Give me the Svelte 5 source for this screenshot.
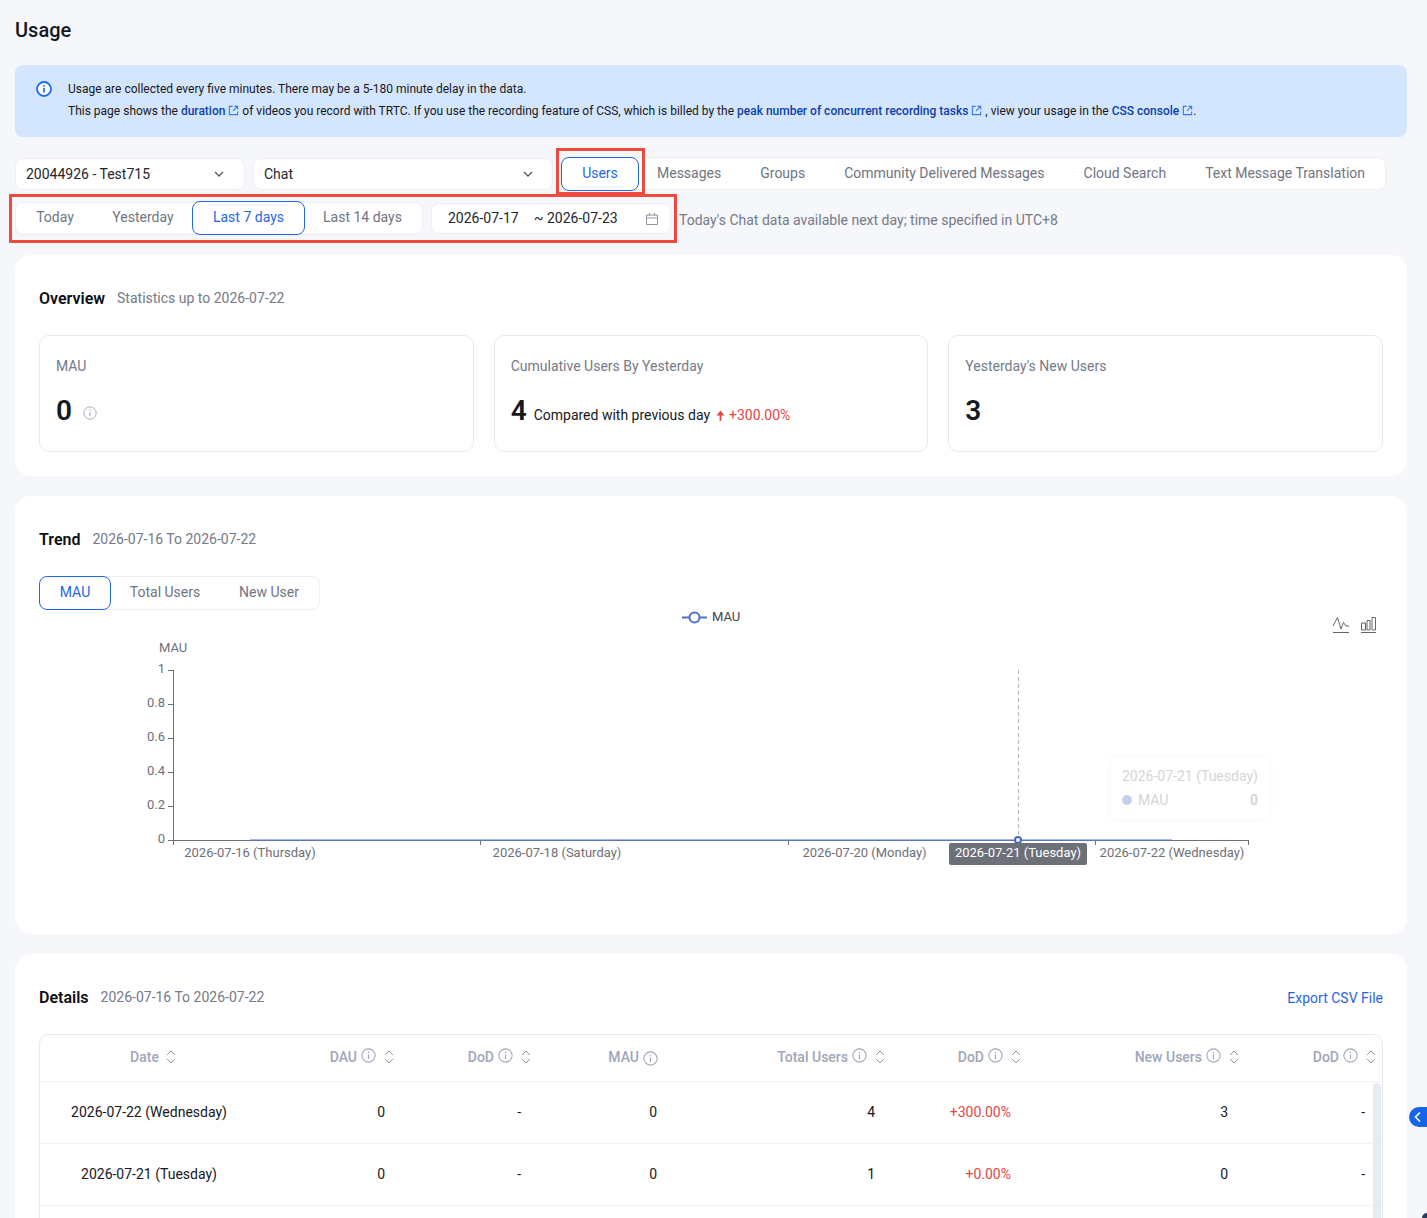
<script>
  const ticks = [
    { y: 670, t: '1' }, { y: 704, t: '0.8' }, { y: 738, t: '0.6' },
    { y: 772, t: '0.4' }, { y: 806, t: '0.2' }, { y: 840, t: '0' }
  ];
  const xTicks = [173, 480, 788, 1095, 1248];
  const xLabels = [
    { x: 250, t: '2026-07-16 (Thursday)' },
    { x: 557, t: '2026-07-18 (Saturday)' },
    { x: 864.5, t: '2026-07-20 (Monday)' },
    { x: 1172, t: '2026-07-22 (Wednesday)' }
  ];
  const headers = [
    { t: 'DAU', info: true, sort: true },
    { t: 'DoD', info: true, sort: true },
    { t: 'MAU', info: true, sort: false, low: true },
    { t: 'Total Users', info: true, sort: true },
    { t: 'DoD', info: true, sort: true },
    { t: 'New Users', info: true, sort: true },
    { t: 'DoD', info: true, sort: true }
  ];
  const rows = [
    { date: '2026-07-22 (Wednesday)', v: ['0', '-', '0', '4', '+300.00%', '3', '-'] },
    { date: '2026-07-21 (Tuesday)', v: ['0', '-', '0', '1', '+0.00%', '0', '-'] }
  ];
</script>

{#snippet ext()}
  <svg class="ext" viewBox="0 0 12 12" width="11" height="11"><path d="M5 1.5H1.5v9h9V7M7 1.5h3.5V5M10.5 1.5 5.5 6.5" fill="none" stroke="#3a7bec" stroke-width="1.2"/></svg>
{/snippet}
{#snippet info(size = 14, cls = '')}
  <svg class="info {cls}" viewBox="0 0 14 14" width={size} height={size}><circle cx="7" cy="7" r="6.2" fill="none" stroke="currentColor" stroke-width="1"/><path d="M7 6v4.2M7 3.6v1.2" stroke="currentColor" stroke-width="1.1" fill="none"/></svg>
{/snippet}
{#snippet sort()}
  <svg class="sort" viewBox="0 0 10 16" width="10" height="16"><path d="M1.2 6 5 2l3.8 4M1.2 10 5 14l3.8-4" fill="none" stroke="#8f96a3" stroke-width="1"/></svg>
{/snippet}
{#snippet chevron()}
  <svg viewBox="0 0 12 12" width="12" height="12"><path d="M2 4l4 4 4-4" fill="none" stroke="#555b66" stroke-width="1.3"/></svg>
{/snippet}

<div class="page">
  <h1>Usage</h1>

  <div class="banner">
    <svg class="bicon" viewBox="0 0 16 16" width="16" height="16"><circle cx="8" cy="8" r="7" fill="#fff" stroke="#1a6df2" stroke-width="1.8"/><path d="M8 7v4.4M8 4.2v1.5" stroke="#1a6df2" stroke-width="1.7"/></svg>
    <div class="btext">
      <p>Usage are collected every five minutes. There may be a 5-180 minute delay in the data.</p>
      <p>This page shows the <a href="#d">duration</a> {@render ext()} of videos you record with TRTC. If you use the recording feature of CSS, which is billed by the <a href="#p">peak number of concurrent recording tasks</a> {@render ext()} , view your usage in the <a href="#c">CSS console</a> {@render ext()}.</p>
    </div>
  </div>

  <div class="row1">
    <div class="select s1"><span>20044926 - Test715</span>{@render chevron()}</div>
    <div class="select s2"><span>Chat</span>{@render chevron()}</div>
    <div class="tabs t1">
      <span class="tab on users">Users</span>
      <span class="tab">Messages</span>
      <span class="tab">Groups</span>
      <span class="tab">Community Delivered Messages</span>
      <span class="tab">Cloud Search</span>
      <span class="tab">Text Message Translation</span>
    </div>
  </div>

  <div class="row2">
    <div class="tabs t2">
      <span class="tab">Today</span>
      <span class="tab">Yesterday</span>
      <span class="tab on l7">Last 7 days</span>
      <span class="tab">Last 14 days</span>
    </div>
    <div class="range">
      <span class="d1">2026-07-17</span><span class="d2">~ 2026-07-23</span>
      <svg viewBox="0 0 14 14" width="14" height="14"><path d="M1.5 3h11v9.5h-11zM1.5 6h11M4.5 1v3M9.5 1v3" fill="none" stroke="#8f96a3" stroke-width="1"/></svg>
    </div>
    <span class="note">Today's Chat data available next day; time specified in UTC+8</span>
  </div>

  <span class="mark m1"></span>
  <span class="mark m2"></span>

  <section class="card overview">
    <div class="head"><b>Overview</b><span>Statistics up to 2026-07-22</span></div>
    <div class="stats">
      <div class="stat">
        <div class="label">MAU</div>
        <div class="val"><strong>0</strong>{@render info(14, 'vinfo')}</div>
      </div>
      <div class="stat">
        <div class="label">Cumulative Users By Yesterday</div>
        <div class="val"><strong>4</strong><span class="cmp">Compared with previous day</span>
          <svg class="up" viewBox="0 0 10 12" width="9" height="11"><path d="M5 12V4" fill="none" stroke="#e54545" stroke-width="2"/><path d="M0.5 6 5 0.5 9.500 6z" fill="#e54545"/></svg>
          <span class="red">+300.00%</span></div>
      </div>
      <div class="stat">
        <div class="label">Yesterday's New Users</div>
        <div class="val"><strong>3</strong></div>
      </div>
    </div>
  </section>

  <section class="card trend">
    <div class="head"><b>Trend</b><span>2026-07-16 To 2026-07-22</span></div>
    <div class="tabs t3">
      <span class="tab on mau">MAU</span>
      <span class="tab">Total Users</span>
      <span class="tab">New User</span>
    </div>
    <div class="chart">
      <svg viewBox="39 610 1344 270" width="1344" height="270">
        <g class="axis">
          <path d="M173.5 670v170.5M168 670.5h5.5M168 704.5h5.5M168 738.5h5.5M168 772.5h5.5M168 806.5h5.5M168 840.5h5.5" />
          <path d="M173 840.5h1076" />
          {#each xTicks as x}<path d="M{x + .5} 840v5" />{/each}
        </g>
        <text class="tx" x="159" y="652">MAU</text>
        {#each ticks as t}<text class="tx" x="165" y={t.y + 3} text-anchor="end">{t.t}</text>{/each}
        {#each xLabels as l}<text class="tx" x={l.x} y="857" text-anchor="middle">{l.t}</text>{/each}
        <path d="M250 840.2h922" stroke="#5b74c4" stroke-width="1.5" fill="none"/>
        <path d="M1018.5 670v170" stroke="#b4b7c2" stroke-dasharray="4 3" fill="none"/>
        <circle cx="1018" cy="840" r="3" fill="#fff" stroke="#4367d1" stroke-width="2"/>

        <path d="M682 617.5h25" stroke="#4f6fc9" stroke-width="2" fill="none"/>
        <circle cx="694.5" cy="617.5" r="5" fill="#fff" stroke="#4f6fc9" stroke-width="2"/>
        <text class="tx lg" x="712" y="621">MAU</text>

        <path d="M1333 632.5h16M1333 626l4.500-8.500 3.500 11.500 2.500-6.500 2.500 3.500h3" fill="none" stroke="#666" stroke-width="1"/>
        <path d="M1361 632.5h15M1361.5 623h4v7h-4zM1367 620.500h3v9.500h-3zM1372 617.500h3.500v12.500h-3.500z" fill="none" stroke="#666" stroke-width="1"/>

        <rect x="949" y="843" width="138" height="22" rx="2" fill="#6e7079"/>
        <text class="tx act" x="1018" y="857" text-anchor="middle">2026-07-21 (Tuesday)</text>
      </svg>
      <div class="tip">
        <div class="tipd">2026-07-21 (Tuesday)</div>
        <div class="tipr"><i></i><span>MAU</span><b>0</b></div>
      </div>
    </div>
  </section>

  <section class="card details">
    <div class="head dh"><b>Details</b><span>2026-07-16 To 2026-07-22</span><a href="#e">Export CSV File</a></div>
    <div class="table">
      <div class="tr th">
        <div class="c date">Date {@render sort()}</div>
        {#each headers as h}
          <div class="c num" class:nosort={!h.sort}>{h.t}{#if h.info}{@render info(15, h.low ? 'low' : 'hi')}{/if}{#if h.sort}{@render sort()}{/if}</div>
        {/each}
      </div>
      {#each rows as r}
        <div class="tr body">
          <div class="c date">{r.date}</div>
          {#each r.v as v}
            <div class="c num val2" class:red={v.startsWith('+')}>{v}</div>
          {/each}
        </div>
      {/each}
      <span class="bar"></span>
    </div>
  </section>

  <span class="collapse"><svg viewBox="0 0 10 12" width="10" height="12"><path d="M7 1.500 2.500 6 7 10.500" fill="none" stroke="#fff" stroke-width="1.6"/></svg></span>
  <span class="corner"></span>
</div>

<style>
  :global(body) { margin: 0; background: #f5f7fb; }
  .page {
    position: relative; box-sizing: border-box; width: 1427px; height: 1218px; overflow: hidden;
    padding: 0 20px 0 15px; background: #f5f7fb;
    font-family: Roboto, "Liberation Sans", sans-serif; font-size: 14px; color: #16181d;
  }
  h1 { margin: 0; padding-top: 18px; height: 65px; box-sizing: border-box; font-size: 20px; line-height: 24px; font-weight: 500; }
  .banner { display: flex; height: 72px; box-sizing: border-box; background: #d4e5fe; border-radius: 8px; padding: 13px 21px; gap: 16px; }
  .bicon { margin-top: 3px; flex: none; }
  .btext p { margin: 0; font-size: 12px; line-height: 22px; color: #16181d; white-space: nowrap; }
  .btext a { color: #0b3fae; text-decoration: none; font-weight: 500; }
  .ext { vertical-align: -1px; }
  .row1 { display: flex; margin-top: 21px; height: 33px; gap: 8px; }
  .select {
    display: flex; align-items: center; justify-content: space-between; box-sizing: border-box;
    height: 32px; padding: 0 19px 1px 10px; background: #fff; border: 1px solid #eceef3; border-radius: 8px; color: #23262d;
  }
  .s1 { width: 230px; }
  .s2 { width: 300px; padding-right: 18px; }
  .tabs { display: inline-flex; align-items: center; background: #fff; border: 1px solid #eceef3; border-radius: 8px; box-sizing: border-box; color: #6f7582; }
  .t1 { width: 826px; height: 33px; margin-top: -1px; margin-left: -1px; }
  .tab { flex: none; display: flex; align-items: center; justify-content: center; padding-bottom: 2px; box-sizing: border-box; }
  .t1 .tab { padding: 0 19.5px 2px; }
  .t1 .tab.users { width: 78px; padding: 0 0 2px; height: 34px; margin-right: -1.5px; }
  .on { border: 1px solid #1f66e8; border-radius: 8px; color: #1f66e8; background: #fff; }
  .row2 { display: flex; align-items: center; margin-top: 10px; height: 34px; }
  .t2 { width: 408px; height: 33px; }
  .t2 .tab { height: 34px; }
  .t2 .tab:nth-child(1) { width: 78px; }
  .t2 .tab:nth-child(2) { width: 98px; }
  .t2 .tab.l7 { width: 113px; }
  .t2 .tab:nth-child(4) { width: 115px; }
  .range { display: flex; align-items: center; box-sizing: border-box; width: 240px; height: 31px; margin-left: 8px; padding-left: 16px; background: #fff; border: 1px solid #eceef3; border-radius: 8px; color: #23262d; position: relative; }
  .d1 { width: 86px; }
  .range svg { position: absolute; right: 11px; top: 8px; }
  .note { margin: 3px 0 0 8px; color: #747a87; white-space: nowrap; }
  .mark { position: absolute; border: 3px solid #ee4a3f; box-sizing: border-box; pointer-events: none; }
  .m1 { left: 556px; top: 148px; width: 89px; height: 47px; }
  .m2 { left: 9px; top: 194px; width: 668px; height: 49px; }
  .card { background: #fff; border-radius: 16px; box-sizing: border-box; }
  .overview { margin-top: 20px; height: 221px; padding: 34px 24px 0; }
  .head { display: flex; align-items: center; gap: 12px; line-height: 18px; height: 18px; }
  .head b { font-size: 16px; font-weight: 600; color: #0d0f13; margin-top: 1px; }
  .head span { color: #747a87; }
  .stats { display: grid; grid-template-columns: repeat(3, 1fr); gap: 20px; margin-top: 28px; }
  .stat { height: 117px; box-sizing: border-box; border: 1px solid #e6e9f1; border-radius: 10px; padding: 21px 16px 0; }
  .label { color: #747a87; line-height: 18px; }
  .val { display: flex; align-items: center; margin-top: 19px; height: 34px; }
  .val strong { font-size: 28px; font-weight: 600; color: #16181d; line-height: 34px; }
  :global(.vinfo) { color: #a8afc2; margin: 3px 0 0 11px; }
  .cmp { margin: 7px 0 0 7px; }
  .up { margin: 9px 4px 0 6px; }
  .red { color: #e54545; }
  .val .red { margin-top: 7px; margin-left: 0; }
  .trend { margin-top: 20px; height: 438px; padding: 34px 24px 0; position: relative; }
  .t3 { margin-top: 28px; height: 34px; width: 281px; display: flex; }
  .t3 .tab { height: 34px; }
  .t3 .mau { width: 72px; margin-left: -1px; }
  .t3 .tab:nth-child(2) { width: 108px; }
  .t3 .tab:nth-child(3) { width: 100px; }
  .chart { position: relative; height: 270px; }
  .chart svg { display: block; }
  .axis path { stroke: #6e7079; fill: none; }
  .tx { font-family: Roboto, "Liberation Sans", sans-serif; font-size: 13px; fill: #6e7079; }
  .lg { fill: #444; }
  .tx.act { fill: #fff; }
  .tip {
    position: absolute; left: 1072px; top: 148px; width: 158px; height: 61px; box-sizing: border-box; padding: 9px 11px 9px 11px;
    background: rgba(255,255,255,.9); border-radius: 4px; box-shadow: 0 0 10px rgba(0,0,0,.04); color: #d5d5d8; line-height: 18px; white-space: nowrap;
  }
  .tipr { display: flex; align-items: center; margin-top: 6px; }
  .tipr i { width: 10px; height: 10px; border-radius: 50%; background: #c5d0ee; margin-right: 6px; }
  .tipr b { margin-left: auto; font-weight: 700; }
  .details { margin-top: 20px; height: 400px; padding: 34px 24px 0; }
  .dh a { margin: 1px 0 0 auto; color: #1f66e8; text-decoration: none; }
  .table { position: relative; margin-top: 28px; border: 1px solid #e6e9f1; border-radius: 10px; height: 300px; overflow: hidden; }
  .tr { display: grid; box-sizing: border-box; grid-template-columns: 218px 137px 136px 136px 218px 136px 217px 137px; height: 62px; border-bottom: 1px solid #f1f3f7; align-items: center; color: #16181d; }
  .tr.body { padding-bottom: 2px; }
  .tr.th { height: 47px; padding-bottom: 2px; color: #a0a6b8; font-weight: 500; }
  .c { white-space: nowrap; }
  .date { text-align: center; }
  .num { text-align: right; padding-right: 10px; }
  .th .num { padding-right: 0; display: flex; justify-content: flex-end; align-items: center; }
  .th .num:nth-child(2) { padding-right: 1px; }
  .th .num:nth-child(7), .th .num:nth-child(8) { margin-right: -1px; }
  .th .num.nosort { padding-right: 9px; }
  .th .date { display: flex; justify-content: center; align-items: center; gap: 7px; padding-left: 8px; }
  :global(.info.hi) { color: #a0a6b8; margin: -3px 0 0 4px; }
  :global(.info.low) { color: #a0a6b8; margin: 2px 0 0 4px; }
  :global(.sort) { margin-left: 8px; }
  .th .date :global(.sort) { margin-left: 0; }
  .bar { position: absolute; right: 1px; top: 48px; width: 8px; height: 260px; background: #e6ebf5; border-radius: 4px; }
  .collapse { position: absolute; right: 0; top: 1107px; width: 18px; height: 20px; background: #1664ea; border-radius: 10px 0 0 10px; display: flex; align-items: center; justify-content: center; }
  .corner { position: absolute; right: 0; bottom: 0; width: 5px; height: 5px; background: #2d3a5e; border-radius: 5px 0 0 0; }
</style>
